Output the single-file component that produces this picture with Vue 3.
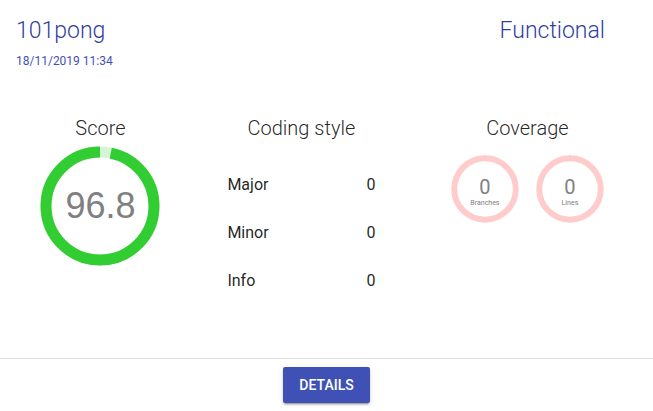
<script setup>
const project = { name: '101pong', date: '18/11/2019 11:34', kind: 'Functional' }
const score = 96.8
const styleCounts = [
  { label: 'Major', count: 0 },
  { label: 'Minor', count: 0 },
  { label: 'Info', count: 0 },
]
const coverage = [
  { label: 'Branches', value: 0 },
  { label: 'Lines', value: 0 },
]
</script>

<template>
  <main class="card">
    <header class="header">
      <div>
        <h1 class="title">{{ project.name }}</h1>
        <p class="date">{{ project.date }}</p>
      </div>
      <h2 class="title kind">{{ project.kind }}</h2>
    </header>

    <div class="metrics">
      <section class="metric">
        <h3 class="heading">Score</h3>
        <div class="ring score">
          <svg viewBox="0 0 120 120" aria-hidden="true">
            <circle class="rest" cx="60" cy="60" r="54" />
            <circle
              class="filled"
              cx="60"
              cy="60"
              r="54"
              pathLength="100"
              :stroke-dasharray="`${score} 100`"
              transform="matrix(0 -1 -1 0 120 120)"
            />
          </svg>
          <span class="score-value">{{ score }}</span>
        </div>
      </section>

      <section class="metric">
        <h3 class="heading">Coding style</h3>
        <dl class="counts">
          <div v-for="item in styleCounts" :key="item.label" class="count">
            <dt>{{ item.label }}</dt>
            <dd>{{ item.count }}</dd>
          </div>
        </dl>
      </section>

      <section class="metric">
        <h3 class="heading">Coverage</h3>
        <div class="coverage">
          <div v-for="item in coverage" :key="item.label" class="ring small">
            <svg viewBox="0 0 68 68" aria-hidden="true">
              <circle class="empty" cx="34" cy="34" r="30.75" />
              <path class="seam" d="M34 0.5V6" />
            </svg>
            <span class="small-value">{{ item.value }}</span>
            <span class="small-label">{{ item.label }}</span>
          </div>
        </div>
      </section>
    </div>

    <footer class="footer">
      <button type="button" class="details">DETAILS</button>
    </footer>
  </main>
</template>

<style>
body {
  margin: 0;
  background: #fff;
}
</style>

<style scoped>
.card {
  display: flex;
  flex-direction: column;
  min-height: 100vh;
  box-sizing: border-box;
  font-family: Roboto, "Liberation Sans", sans-serif;
  color: rgba(0, 0, 0, 0.87);
}

.header {
  display: flex;
  justify-content: space-between;
  padding: 15px 48px 0 16px;
}

.title {
  margin: 0;
  font-size: 23px;
  line-height: 32px;
  font-weight: 300;
  color: #303f9f;
}

.date {
  margin: 4px 0 0;
  font-size: 12px;
  line-height: 20px;
  color: #3f51b5;
}

.metrics {
  display: grid;
  grid-template-columns: 4fr 4fr 5fr;
  flex: 1;
  padding: 41px 0 54px;
}

.metric {
  display: flex;
  flex-direction: column;
  align-items: center;
}

.heading {
  margin: 0;
  padding: 4px 0;
  font-size: 20px;
  line-height: 24px;
  font-weight: 300;
}

.ring {
  display: grid;
  place-items: center;
  align-content: center;
}

.ring svg {
  grid-area: 1 / 1 / 3 / 2;
  width: 100%;
}

.ring circle {
  fill: none;
}

.score {
  width: 120px;
  height: 120px;
  margin-top: 2px;
}

.score circle {
  stroke-width: 11;
}

.rest {
  stroke: #d6f5d6;
}

.filled {
  stroke: #32cd32;
}

.score-value {
  grid-area: 1 / 1 / 3 / 2;
  font-family: "Liberation Sans", sans-serif;
  font-size: 36px;
  line-height: 40px;
  color: #808080;
}

.counts {
  width: 148px;
  margin: 16px 0 0;
}

.count {
  display: flex;
  justify-content: space-between;
  align-items: center;
  height: 48px;
  font-size: 16px;
}

.count dd {
  margin: 0;
}

.coverage {
  display: flex;
  gap: 17px;
  margin-top: 11px;
}

.small {
  width: 68px;
  height: 68px;
  grid-template-rows: 43px 25px;
  color: #808080;
}

.empty {
  stroke: #ffcccc;
  stroke-width: 6;
}

.seam {
  stroke: #ffb8b8;
  stroke-width: 0.5;
}

.small-value {
  grid-area: 1 / 1;
  align-self: end;
  font-size: 20px;
  line-height: 22px;
}

.small-label {
  grid-area: 2 / 1;
  align-self: start;
  font-size: 7px;
  line-height: 10px;
}

.footer {
  display: flex;
  justify-content: center;
  padding: 8px;
  border-top: 1px solid #e0e0e0;
}

.details {
  height: 36px;
  padding: 0 16px;
  border: 0;
  border-radius: 2px;
  background: #3f51b5;
  color: #fff;
  font-family: inherit;
  font-size: 14px;
  font-weight: 500;
  box-shadow:
    0 3px 1px -2px rgba(0, 0, 0, 0.2),
    0 2px 2px 0 rgba(0, 0, 0, 0.14),
    0 1px 5px 0 rgba(0, 0, 0, 0.12);
}
</style>
